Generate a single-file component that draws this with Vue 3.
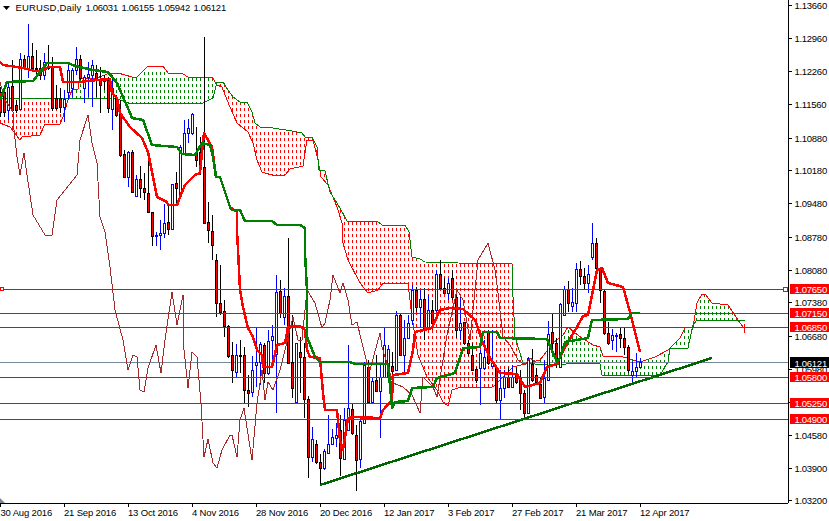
<template>
  <div class="chart">
    <svg class="plot" width="829" height="521" viewBox="0 0 829 521">
      <!-- kumo -->
      <path :d="kumoRed" class="kumo" stroke="#ff0000" />
      <path :d="kumoGreen" class="kumo" stroke="#008000" />
      <polyline :points="spanA" class="line" stroke="#ff0000" stroke-width="1" />
      <polyline :points="spanB" class="line" stroke="#008000" stroke-width="1" />

      <line x1="0" y1="362.5" x2="788" y2="362.5" class="crisp" stroke="#778899" />

      <!-- candles -->
      <g v-for="(c, i) in candles" :key="i" class="crisp">
        <line
          :x1="i * 4 + 0.5"
          :x2="i * 4 + 0.5"
          :y1="c[0]"
          :y2="c[3]"
          :stroke="c[4] ? '#0000ff' : '#000000'"
        />
        <rect
          :x="i * 4 - 0.5"
          :y="c[1] + 0.5"
          width="2"
          :height="Math.max(c[2] - c[1], 1)"
          :fill="c[4] ? '#ffffff' : '#ff0000'"
          :stroke="c[4] ? '#0000ff' : '#000000'"
        />
      </g>

      <polyline :points="chikou" class="line" stroke="#a52a2a" stroke-width="1" />
      <polyline :points="tenkan" class="line" stroke="#ff0000" stroke-width="2.5" />
      <polyline :points="kijun" class="line" stroke="#008000" stroke-width="2.5" />
      <polyline points="320,485 712,358" class="line" stroke="#006400" stroke-width="2.5" />

      <!-- horizontal levels -->
      <line
        v-for="l in levels"
        :key="l.text"
        x1="0"
        x2="788"
        :y1="l.y + 0.5"
        :y2="l.y + 0.5"
        class="crisp"
        stroke="#ff0000"
      />
      <rect x="0.5" y="287.5" width="3" height="3" class="crisp" fill="#ffffff" stroke="#ff0000" />
      <rect x="783.5" y="287.5" width="4" height="4" class="crisp" fill="#ffffff" stroke="#ff0000" />

      <!-- header -->
      <polygon points="3,6 10,6 6.5,10" fill="#000000" />
      <text x="15.5" y="11" class="name">EURUSD,Daily</text>
      <text v-for="(q, i) in quotes" :key="q" :x="85.5 + i * 36" y="11" class="num">{{ q }}</text>

      <!-- price axis -->
      <line x1="788.5" y1="0" x2="788.5" y2="503" class="crisp" stroke="#000000" />
      <g v-for="t in priceTicks" :key="t.text">
        <line x1="789" x2="792" :y1="t.y + 0.5" :y2="t.y + 0.5" class="crisp" stroke="#000000" />
        <text x="794.5" :y="t.y + 4" class="num">{{ t.text }}</text>
      </g>
      <g v-for="l in levels" :key="'label' + l.text">
        <rect x="790" :y="l.y - 5" width="39" height="10" fill="#ff0000" />
        <text x="794.5" :y="l.y + 4" class="num tag">{{ l.text }}</text>
      </g>
      <rect x="790" y="357" width="39" height="11" fill="#000000" />
      <text x="794.5" y="366.5" class="num tag">1.06121</text>

      <!-- time axis -->
      <line x1="0" y1="503.5" x2="788" y2="503.5" class="crisp" stroke="#000000" />
      <polygon points="0,498 0,503 5,503" fill="#778899" />
      <g v-for="(d, i) in dates" :key="d">
        <line
          :x1="i * 64 + 0.5"
          :x2="i * 64 + 0.5"
          y1="504"
          y2="507"
          class="crisp"
          stroke="#000000"
        />
        <text :x="i * 64 + (i ? 0 : 0.5)" y="516" class="date">{{ d }}</text>
      </g>
    </svg>
  </div>
</template>

<script setup>
const quotes = ["1.06031", "1.06155", "1.05942", "1.06121"];

const dates = [
  "30 Aug 2016",
  "21 Sep 2016",
  "13 Oct 2016",
  "4 Nov 2016",
  "28 Nov 2016",
  "20 Dec 2016",
  "12 Jan 2017",
  "3 Feb 2017",
  "27 Feb 2017",
  "21 Mar 2017",
  "12 Apr 2017",
];

const priceTicks = [
  ["1.13660", 5],
  ["1.12960", 38],
  ["1.12260", 71],
  ["1.11560", 104],
  ["1.10880", 138],
  ["1.10180", 170],
  ["1.09480", 203],
  ["1.08780", 237],
  ["1.08080", 270],
  ["1.07380", 302],
  ["1.06680", 336],
  ["1.05980", 369],
  ["1.05280", 402],
  ["1.04580", 435],
  ["1.03900", 468],
  ["1.03200", 500],
].map(([text, y]) => ({ text, y }));

const levels = [
  { text: "1.07650", y: 289 },
  { text: "1.07150", y: 313 },
  { text: "1.06850", y: 327 },
  { text: "1.05800", y: 377 },
  { text: "1.05250", y: 403 },
  { text: "1.04900", y: 419 },
];

// high, body top, body bottom, low, up? one row per bar, 4px apart
const candles = [
  [87,92,112,117,0],[87,92,112,117,0],[82,87,110,120,1],[60,86,110,110,0],[100,105,110,113,0],
  [53,59,109,110,1],[55,59,67,68,0],[24,56,68,78,1],[43,56,68,70,0],[50,68,68,75,0],
  [60,68,75,80,0],[53,62,75,80,1],[45,67,68,70,0],[57,67,108,111,0],[85,98,108,110,0],
  [88,98,107,113,0],[90,99,107,122,1],[63,70,92,100,1],[68,70,88,97,1],[47,59,70,75,1],
  [55,59,78,80,0],[75,77,88,103,1],[62,74,77,97,1],[60,65,75,107,1],[65,73,80,97,0],
  [67,80,85,113,0],[75,80,80,90,0],[77,80,108,113,0],[75,88,109,130,1],[95,98,115,117,0],
  [100,114,155,157,0],[150,154,177,178,0],[151,152,177,187,1],[150,152,192,193,0],[175,179,196,197,1],
  [166,179,188,198,0],[173,188,192,200,0],[160,193,212,213,0],[212,212,236,246,0],[232,235,235,246,1],
  [220,233,235,250,1],[204,223,233,238,1],[205,222,229,235,0],[184,184,229,230,1],[172,183,188,205,0],
  [145,147,195,197,1],[120,133,153,155,1],[119,128,133,143,1],[113,114,133,135,1],[127,152,160,167,0],
  [137,152,165,175,0],[37,167,223,224,0],[202,222,230,243,0],[215,231,245,260,0],[254,260,303,317,0],
  [265,303,312,315,0],[300,311,326,337,0],[325,326,356,358,0],[342,355,370,383,0],[344,355,372,378,1],
  [340,355,355,373,0],[347,355,390,403,0],[375,390,393,407,0],[356,370,392,397,1],[328,362,365,387,1],
  [342,344,362,385,1],[343,345,373,383,0],[330,341,373,375,1],[325,336,340,363,1],[275,292,354,413,1],
  [280,291,313,318,0],[288,296,317,325,1],[238,296,363,363,0],[315,362,388,398,0],[343,343,402,402,1],
  [337,352,357,393,0],[343,357,399,418,0],[396,399,457,478,0],[427,439,457,462,1],[440,444,462,464,0],
  [454,462,468,485,0],[449,451,468,470,1],[415,444,453,453,1],[429,437,444,445,1],[423,435,438,447,1],
  [415,430,458,476,0],[408,420,459,459,1],[345,408,430,430,1],[404,409,433,435,0],[425,435,460,491,0],
  [418,421,459,468,1],[362,365,423,424,1],[360,367,402,403,0],[377,381,402,402,1],[355,380,391,392,0],
  [363,377,391,438,1],[328,345,377,377,1],[345,349,377,378,1],[352,366,371,397,0],[311,315,370,371,1],
  [313,315,355,355,0],[320,338,355,373,1],[315,323,338,338,1],[285,290,320,325,1],[287,290,307,312,0],
  [290,299,307,327,1],[288,299,330,340,0],[295,310,328,330,1],[300,310,323,330,0],[270,274,310,312,1],
  [260,274,288,289,0],[278,288,293,294,0],[278,283,293,300,1],[270,278,297,300,0],[293,297,330,338,0],
  [297,323,330,340,1],[322,322,343,345,0],[340,343,353,356,0],[343,355,370,371,0],[367,369,380,383,0],
  [350,353,368,405,1],[340,357,368,370,1],[330,332,363,365,0],[330,363,366,367,1],[365,367,400,403,0],
  [370,388,400,419,1],[370,377,388,398,1],[367,377,387,388,0],[365,377,387,388,1],[367,375,382,384,0],
  [370,378,393,410,0],[390,393,413,419,0],[357,358,413,414,1],[349,364,380,382,0],[368,375,382,385,0],
  [377,384,398,399,0],[360,378,397,403,1],[321,334,380,381,1],[314,332,343,350,0],[338,343,360,368,0],
  [303,304,367,368,1],[286,289,315,316,1],[281,289,303,312,0],[288,302,306,312,1],[263,269,303,312,1],
  [261,269,276,285,0],[268,276,283,289,0],[265,274,283,293,1],[223,243,257,260,1],[238,243,268,271,0],
  [268,268,290,303,0],[290,291,333,335,0],[322,333,343,345,0],[329,335,340,350,1],[333,335,335,352,1],
  [327,334,338,348,0],[328,338,347,355,0],[345,347,370,373,0],[362,371,375,383,1],[353,367,371,378,1],
  [358,362,367,367,1],
];

const tenkanPts = [
  [0,62],[3,65],[10,66],[23,68],[35,71],[43,71],[48,67],[60,67],[63,82],[68,82],[80,82],[97,80],[110,79],
  [112,93],[117,98],[120,113],[130,127],[142,138],[148,152],[152,172],[157,197],[167,202],[168,205],[177,205],
  [182,192],[185,185],[195,175],[200,173],[202,153],[204,133],[212,147],[216,177],[220,177],[230,207],[237,212],
  [237,230],[238,250],[240,290],[243,307],[248,328],[253,337],[257,350],[262,355],[263,367],[272,367],[277,345],
  [285,343],[288,327],[300,326],[305,330],[307,350],[310,357],[320,358],[323,393],[325,410],[337,410],[340,440],
  [343,450],[348,418],[353,417],[380,418],[383,410],[392,400],[393,375],[408,373],[413,350],[415,332],[432,328],
  [440,310],[450,308],[463,309],[475,320],[483,343],[490,358],[497,368],[500,373],[517,374],[525,387],[540,383],
  [547,367],[557,364],[562,353],[568,342],[577,327],[583,316],[588,315],[593,290],[597,270],[602,268],[608,283],
  [623,287],[630,312],[640,352],
];

const kijunPts = [
  [0,100],[7,82],[33,81],[40,72],[47,63],[68,63],[75,66],[93,70],[108,72],[117,83],[130,113],[132,118],[143,120],
  [152,145],[177,147],[182,154],[195,155],[202,143],[210,145],[213,157],[216,177],[220,177],[230,207],[232,210],
  [240,210],[245,221],[272,221],[277,225],[300,225],[305,228],[305,253],[307,290],[307,337],[315,357],[320,362],
  [350,362],[355,364],[388,364],[392,408],[395,402],[408,401],[412,388],[433,387],[437,378],[455,373],[463,348],
  [480,347],[483,332],[497,332],[500,338],[547,339],[557,362],[560,358],[565,342],[588,338],[592,320],[628,319],
  [632,313],[640,313],
];

const spanAPts = [
  [0,123],[10,127],[20,140],[22,137],[40,135],[45,124],[60,124],[63,117],[68,100],[72,90],[78,89],[80,78],[97,78],
  [110,73],[118,73],[132,77],[137,77],[147,67],[163,66],[168,73],[183,74],[188,77],[212,77],[217,85],[222,87],
  [227,100],[237,123],[248,132],[253,143],[257,160],[262,172],[275,176],[285,175],[290,169],[303,166],[307,140],
  [313,140],[318,160],[321,177],[328,185],[337,207],[342,223],[343,243],[348,260],[360,283],[368,293],[378,290],
  [383,283],[408,283],[412,317],[418,355],[427,377],[437,390],[443,402],[448,406],[452,390],[458,388],[493,387],
  [513,367],[540,360],[553,343],[563,335],[568,327],[575,333],[582,338],[593,345],[600,347],[603,356],[620,356],
  [640,362],[655,357],[668,350],[680,338],[685,328],[693,327],[697,303],[702,294],[705,294],[712,303],[728,305],
  [740,323],[744,328],[745,333],
];

const spanBPts = [
  [0,98],[115,98],[128,103],[203,103],[213,98],[217,82],[223,82],[228,90],[233,97],[240,102],[247,102],[252,112],
  [255,123],[260,127],[273,128],[292,131],[302,133],[305,137],[312,137],[317,147],[319,170],[325,171],[330,192],
  [340,208],[347,221],[377,221],[382,225],[405,225],[409,232],[412,257],[420,259],[425,262],[458,263],[512,264],
  [513,297],[515,337],[523,363],[547,365],[585,363],[600,364],[602,375],[660,375],[668,362],[670,348],[688,348],
  [693,325],[697,320],[723,320],[745,321],
];

const chikouPts = [
  [0,82],[5,100],[13,112],[14,130],[17,157],[20,175],[24,153],[27,175],[33,215],[45,235],[52,235],[57,200],[65,190],
  [77,175],[80,140],[88,115],[92,143],[97,163],[100,217],[105,232],[110,267],[115,310],[123,340],[128,370],[133,355],
  [137,357],[140,390],[144,392],[148,368],[156,345],[161,373],[165,340],[172,292],[177,325],[183,295],[183,340],
  [188,388],[192,352],[197,357],[201,403],[204,457],[208,439],[213,463],[217,468],[222,450],[230,435],[232,435],
  [237,457],[240,420],[244,408],[252,460],[257,403],[262,370],[265,400],[268,382],[273,390],[280,370],[285,350],
  [293,317],[298,340],[302,340],[307,290],[315,303],[322,328],[325,323],[330,300],[333,275],[340,293],[343,283],
  [348,300],[352,325],[357,322],[362,343],[367,363],[370,370],[380,333],[382,347],[393,383],[403,387],[412,395],
  [420,413],[423,377],[433,387],[437,397],[447,335],[457,290],[463,300],[470,340],[478,260],[488,243],[495,270],
  [498,293],[503,337],[510,345],[518,360],[525,365],[530,358],[536,362],
];

const toPoints = (pts) => pts.map((p) => p.join(",")).join(" ");

const tenkan = toPoints(tenkanPts);
const kijun = toPoints(kijunPts);
const spanA = toPoints(spanAPts);
const spanB = toPoints(spanBPts);
const chikou = toPoints(chikouPts);

// y of a polyline at x
const yAt = (pts, x) => {
  for (let i = 1; i < pts.length; i++) {
    if (x <= pts[i][0]) {
      const [x0, y0] = pts[i - 1];
      const [x1, y1] = pts[i];
      return x1 === x0 ? y1 : y0 + ((x - x0) / (x1 - x0)) * (y1 - y0);
    }
  }
  return pts[pts.length - 1][1];
};

// dashed fill between the two spans, one column per bar
let redPath = "";
let greenPath = "";
for (let x = 0; x <= 744; x += 4) {
  const a = yAt(spanAPts, x);
  const b = yAt(spanBPts, x);
  const top = Math.ceil(Math.min(a, b) / 6) * 6;
  const bottom = Math.round(Math.max(a, b));
  if (bottom - top < 2) continue;
  const seg = `M${x + 0.5} ${top}V${bottom}`;
  if (a > b) redPath += seg;
  else greenPath += seg;
}
const kumoRed = redPath;
const kumoGreen = greenPath;
</script>

<style scoped>
.chart {
  width: 829px;
  height: 521px;
  background: #ffffff;
  overflow: hidden;
}

.plot {
  display: block;
}

.line {
  fill: none;
  shape-rendering: crispEdges;
  stroke-linejoin: round;
}

.crisp {
  shape-rendering: crispEdges;
}

.kumo {
  fill: none;
  stroke-width: 1;
  stroke-dasharray: 3 3;
  shape-rendering: crispEdges;
}

.name {
  font-family: "Liberation Sans", Arial, sans-serif;
  font-size: 9.5px;
  letter-spacing: 0.17px;
  fill: #000000;
}

.num {
  font-family: "Liberation Sans", Arial, sans-serif;
  font-size: 9.5px;
  letter-spacing: -0.28px;
  fill: #000000;
}

.tag {
  fill: #ffffff;
}

.date {
  font-family: "Liberation Sans", Arial, sans-serif;
  font-size: 9.5px;
  letter-spacing: -0.17px;
  fill: #000000;
}
</style>
